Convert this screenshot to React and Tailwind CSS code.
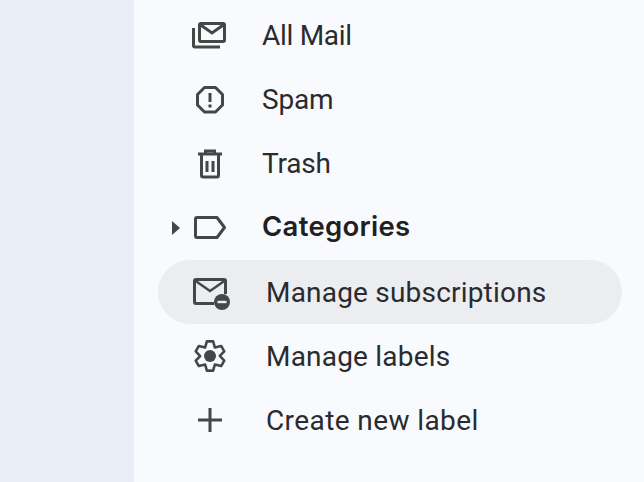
const Ic = ({ children }) => (
  <svg width="48" height="48" viewBox="0 0 48 48" fill="none" stroke="#444746" strokeWidth="3" className="block">
    {children}
  </svg>
);

const gearPath = (() => {
  const pts = [];
  for (let i = 0; i < 6; i++) {
    const a = (i * Math.PI) / 3 - Math.PI / 2;
    const at = (r, d) => {
      const t = a + d;
      return `${(24 + r * Math.cos(t)).toFixed(2)} ${(24 + r * Math.sin(t)).toFixed(2)}`;
    };
    pts.push(at(15, -0.21), at(15, 0.21), at(9.8, 0.52));
  }
  return "M" + pts.join("L") + "z";
})();

const icons = {
  all: (
    <Ic>
      <rect x="13.500" y="11.500" width="25" height="18" rx="1.500" />
      <path d="M14 12.500 26 21 38 12.500" />
      <path d="M7.500 16v17.500a1.500 1.500 0 0 0 1.500 1.500H34" />
    </Ic>
  ),
  spam: (
    <Ic>
      <path d="M18.500 11.500h11l7 7v10.500l-7 7h-11l-7-7V18.500z" strokeLinejoin="round" />
      <path d="M24 17v9" />
      <circle cx="24" cy="30" r="1.800" fill="#444746" stroke="none" />
    </Ic>
  ),
  trash: (
    <Ic>
      <path d="M12 14h24" />
      <path d="M19.500 13.500v-2.500h9v2.500" />
      <path d="M15.500 14v21.500a1.500 1.500 0 0 0 1.500 1.500h14a1.500 1.500 0 0 0 1.500-1.500V14" />
      <path d="M21 21v11M27 21v11" />
    </Ic>
  ),
  cat: (
    <Ic>
      <path d="M11 13.500h20l7.500 10L31 33.500H11a1.500 1.500 0 0 1-1.500-1.500V15a1.500 1.500 0 0 1 1.500-1.500z" strokeLinejoin="round" />
    </Ic>
  ),
  sub: (
    <Ic>
      <path d="M39.500 26V13a1.500 1.500 0 0 0-1.500-1.500H10A1.500 1.500 0 0 0 8.500 13v21a1.500 1.500 0 0 0 1.500 1.500h18" />
      <path d="M9 12.500 24 23 39 12.500" strokeWidth="2.400" />
      <circle cx="36" cy="34" r="8" fill="#444746" stroke="none" />
      <path d="M31.500 34h9" stroke="#eceef1" strokeWidth="2.400" />
    </Ic>
  ),
  gear: (
    <Ic>
      <path d={gearPath} strokeLinejoin="round" strokeWidth="2.600" />
      <circle cx="24" cy="24" r="6" fill="#444746" stroke="none" />
    </Ic>
  ),
  plus: (
    <Ic>
      <path d="M24 12v24M12 24h24" />
    </Ic>
  ),
};

const Row = ({ icon, label, bold, active, arrow, shift, spacing }) => (
  <div className={`flex h-16 items-center rounded-full ${active ? "bg-[#ecedf1]" : ""}`}>
    <div className="ml-[11px] flex w-[14px] justify-center">
      {arrow && <div className="h-0 w-0 border-y-[7px] border-l-[8px] border-y-transparent border-l-[#444746]" />}
    </div>
    <div className="ml-[3px] flex w-[48px] justify-center">{icons[icon]}</div>
    {bold ? (
      <span className="ml-[28px] -translate-y-px font-['Inter'] text-[27.5px] leading-none font-semibold tracking-[0.3px] text-[#1f2023]">
        {label}
      </span>
    ) : (
      <span
        className={`${shift ? "ml-[32px] translate-y-px" : "ml-[28px]"} ${spacing} font-['Roboto'] text-[28px] leading-none text-[#2a2b2e]`}
      >
        {label}
      </span>
    )}
  </div>
);

export default function App() {
  return (
    <div className="flex h-[482px] w-[644px] overflow-hidden bg-[#f8fafd]">
      <div className="w-[134px] bg-[#e9eef6]" />
      <div className="ml-6 flex w-[464px] flex-col pt-1">
        <Row icon="all" label="All Mail" spacing="tracking-[-0.3px]" />
        <Row icon="spam" label="Spam" spacing="tracking-[-0.2px]" />
        <Row icon="trash" label="Trash" spacing="tracking-[-0.2px]" />
        <Row icon="cat" label="Categories" bold arrow />
        <Row icon="sub" label="Manage subscriptions" active shift spacing="tracking-[0.2px]" />
        <Row icon="gear" label="Manage labels" shift spacing="tracking-[0.2px]" />
        <Row icon="plus" label="Create new label" shift spacing="tracking-[0.4px]" />
      </div>
    </div>
  );
}
